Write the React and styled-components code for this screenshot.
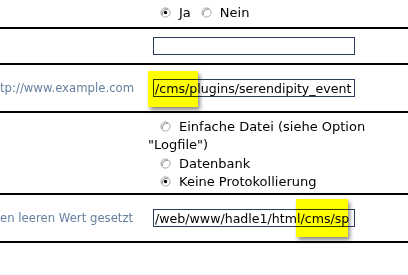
import React from 'react';
import styled, { createGlobalStyle } from 'styled-components';

const Global = createGlobalStyle`
  html, body { margin: 0; padding: 0; background: #fff; }
  body { font-family: "DejaVu Sans", Verdana, sans-serif; color: #000; }
`;

const Page = styled.div`
  position: relative;
  width: 408px;
  height: 275px;
  overflow: hidden;
`;

const Row = styled.div`
  display: grid;
  grid-template-columns: 148px 1fr;
  align-items: ${p => (p.top ? 'start' : 'center')};
  height: ${p => p.h}px;
  padding-top: ${p => p.pt || 0}px;
  box-sizing: border-box;
  border-bottom: 2px solid #000;
`;

const Label = styled.div`
  font-size: 11.7px;
  color: #66809f;
  white-space: nowrap;
  overflow: hidden;
`;

const Value = styled.div`
  font-size: 13px;
  line-height: 18.4px;
  white-space: ${p => (p.wrap ? 'normal' : 'nowrap')};
  width: ${p => (p.wrap ? '250px' : 'auto')};
`;

const Option = styled.div`
  display: block;
`;

const Field = styled.input`
  display: block;
  margin-left: 5px;
  width: 202px;
  height: 18px;
  box-sizing: border-box;
  border: 1px solid #2b3d5b;
  padding: 0 1px;
  font-family: "DejaVu Sans", Verdana, sans-serif;
  font-size: 12.6px;
  color: #000;
  background: transparent;
  outline: none;
`;

const Marker = styled.div`
  position: absolute;
  left: ${p => p.x}px;
  top: ${p => p.y}px;
  width: ${p => p.w}px;
  height: ${p => p.h}px;
  background: #ffff00;
  mix-blend-mode: multiply;
  box-shadow: 2px 3px 4px rgba(0, 0, 0, 0.45);
`;

const RadioBox = styled.svg`
  width: 11px;
  height: 11px;
  margin: 0 8px 0 ${p => p.ml}px;
  vertical-align: -1px;
`;

function Radio({ checked, ml = 12 }) {
  return (
    <RadioBox viewBox="0 0 12 12" ml={ml}>
      <circle cx="6" cy="6" r="5" fill="#fff" stroke="#a0a0a0" strokeWidth="1" />
      <path d="M2.5 8.5 A5 5 0 0 1 8.5 2.5" fill="none" stroke="#707070" strokeWidth="1" />
      {checked && <circle cx="6" cy="6" r="1.8" fill="#000" />}
    </RadioBox>
  );
}

export default function App() {
  return (
    <Page>
      <Global />
      <Row h={29}>
        <Label />
        <Value>
          <Radio checked />Ja<Radio ml={10} />Nein
        </Value>
      </Row>
      <Row h={36}>
        <Label />
        <Field readOnly defaultValue="" />
      </Row>
      <Row h={48}>
        <Label>tp://www.example.com</Label>
        <Field readOnly defaultValue="/cms/plugins/serendipity_event" />
      </Row>
      <Row h={82} pt={5} top>
        <Label />
        <Value wrap>
          <Option><Radio />Einfache Datei (siehe Option "Logfile")</Option>
          <Option><Radio />Datenbank</Option>
          <Option><Radio checked />Keine Protokollierung</Option>
        </Value>
      </Row>
      <Row h={48}>
        <Label>en leeren Wert gesetzt</Label>
        <Field readOnly defaultValue="/web/www/hadle1/html/cms/sp" />
      </Row>
      <Marker x={148} y={71} w={50} h={36} />
      <Marker x={296} y={199} w={52} h={38} />
    </Page>
  );
}
